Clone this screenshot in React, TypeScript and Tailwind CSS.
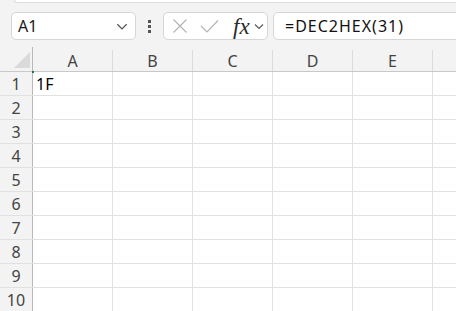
import React from "react";

const cols = ["A", "B", "C", "D", "E", ""];
const rows = [1, 2, 3, 4, 5, 6, 7, 8, 9, 10];

const Chevron = ({ size = 12 }: { size?: number }) => (
  <svg width={size} height={size} viewBox="0 0 12 12" fill="none">
    <path d="M2 4.5 L6 8.5 L10 4.5" stroke="#555" strokeWidth="1.1" />
  </svg>
);

export default function App() {
  return (
    <div
      className="w-[456px] h-[311px] overflow-hidden bg-[#f3f3f3] relative"
      style={{ fontFamily: '"Noto Sans", "Open Sans", sans-serif' }}
    >
      {/* ribbon edge */}
      <div className="h-[3px] ml-[14px] bg-white border-b border-l border-[#dcdcdc] rounded-bl-[4px]" />

      {/* formula bar */}
      <div className="flex items-center mt-[9px] pl-[11px] h-[28px]">
        <div className="w-[125px] h-[28px] bg-white border border-[#d6d6d6] rounded-[5px] flex items-center justify-between pl-[6px] pr-[6px]">
          <span className="text-[16px] text-[#1a1a1a] leading-none">A1</span>
          <Chevron size={14} />
        </div>
        <div className="w-[27px] flex flex-col items-center gap-[2px]">
          <div className="w-[3px] h-[3px] bg-[#555]" />
          <div className="w-[3px] h-[3px] bg-[#555]" />
          <div className="w-[3px] h-[3px] bg-[#555]" />
        </div>
        <div className="w-[105px] h-[28px] bg-white border border-[#d6d6d6] rounded-[5px] flex items-center pl-[8px]">
          <svg width="16" height="16" viewBox="0 0 16 16" fill="none">
            <path d="M1.5 1.5 L14.5 14.5 M14.5 1.5 L1.5 14.5" stroke="#b4b4b4" strokeWidth="1.2" />
          </svg>
          <svg width="19" height="16" viewBox="0 0 19 16" fill="none" className="ml-[12px]">
            <path d="M1 8 L7 14 L18 2.5" stroke="#b4b4b4" strokeWidth="1.2" />
          </svg>
          <span
            className="ml-[14px] text-[23px] italic text-[#2a2a2a] leading-none"
            style={{ fontFamily: '"Liberation Serif", "DejaVu Serif", serif' }}
          >
            fx
          </span>
          <span className="ml-[3px]">
            <Chevron size={12} />
          </span>
        </div>
        <div className="ml-[5px] flex-1 -mr-[20px] h-[28px] bg-white border border-[#d6d6d6] rounded-[5px] flex items-center pl-[11px]">
          <span className="text-[16px] text-[#111] tracking-[1px]">=DEC2HEX(31)</span>
        </div>
      </div>

      {/* grid */}
      <div className="mt-[7px]">
        <div className="flex h-[25px] border-b border-[#c8c8c8]">
          <div className="w-[33px] shrink-0 border-r border-[#b8b8b8] relative">
            <div
              className="absolute right-[2px] bottom-[3px] w-[16px] h-[16px] bg-[#dadada]"
              style={{ clipPath: "polygon(100% 0, 100% 100%, 0 100%)" }}
            />
            <div className="absolute -right-[2px] -bottom-[2px] w-[2px] h-[2px] bg-[#217346]" />
          </div>
          {cols.map((c, i) => (
            <div
              key={i}
              className="w-[80px] shrink-0 border-r border-[#dcdcdc] flex items-center justify-center text-[16px] text-[#444] mt-[3px]"
            >
              {c}
            </div>
          ))}
        </div>
        {rows.map((r) => (
          <div key={r} className="flex h-[24px] border-b border-[#e1e1e1]">
            <div className="w-[33px] shrink-0 border-r border-[#b8b8b8] flex items-center justify-center text-[16px] text-[#444]">
              {r}
            </div>
            {cols.map((c, i) => (
              <div
                key={i}
                className="w-[80px] shrink-0 bg-white border-r border-[#e1e1e1] flex items-center pl-[3px] text-[16px] text-black"
              >
                {r === 1 && i === 0 ? "1F" : ""}
              </div>
            ))}
          </div>
        ))}
      </div>
    </div>
  );
}
